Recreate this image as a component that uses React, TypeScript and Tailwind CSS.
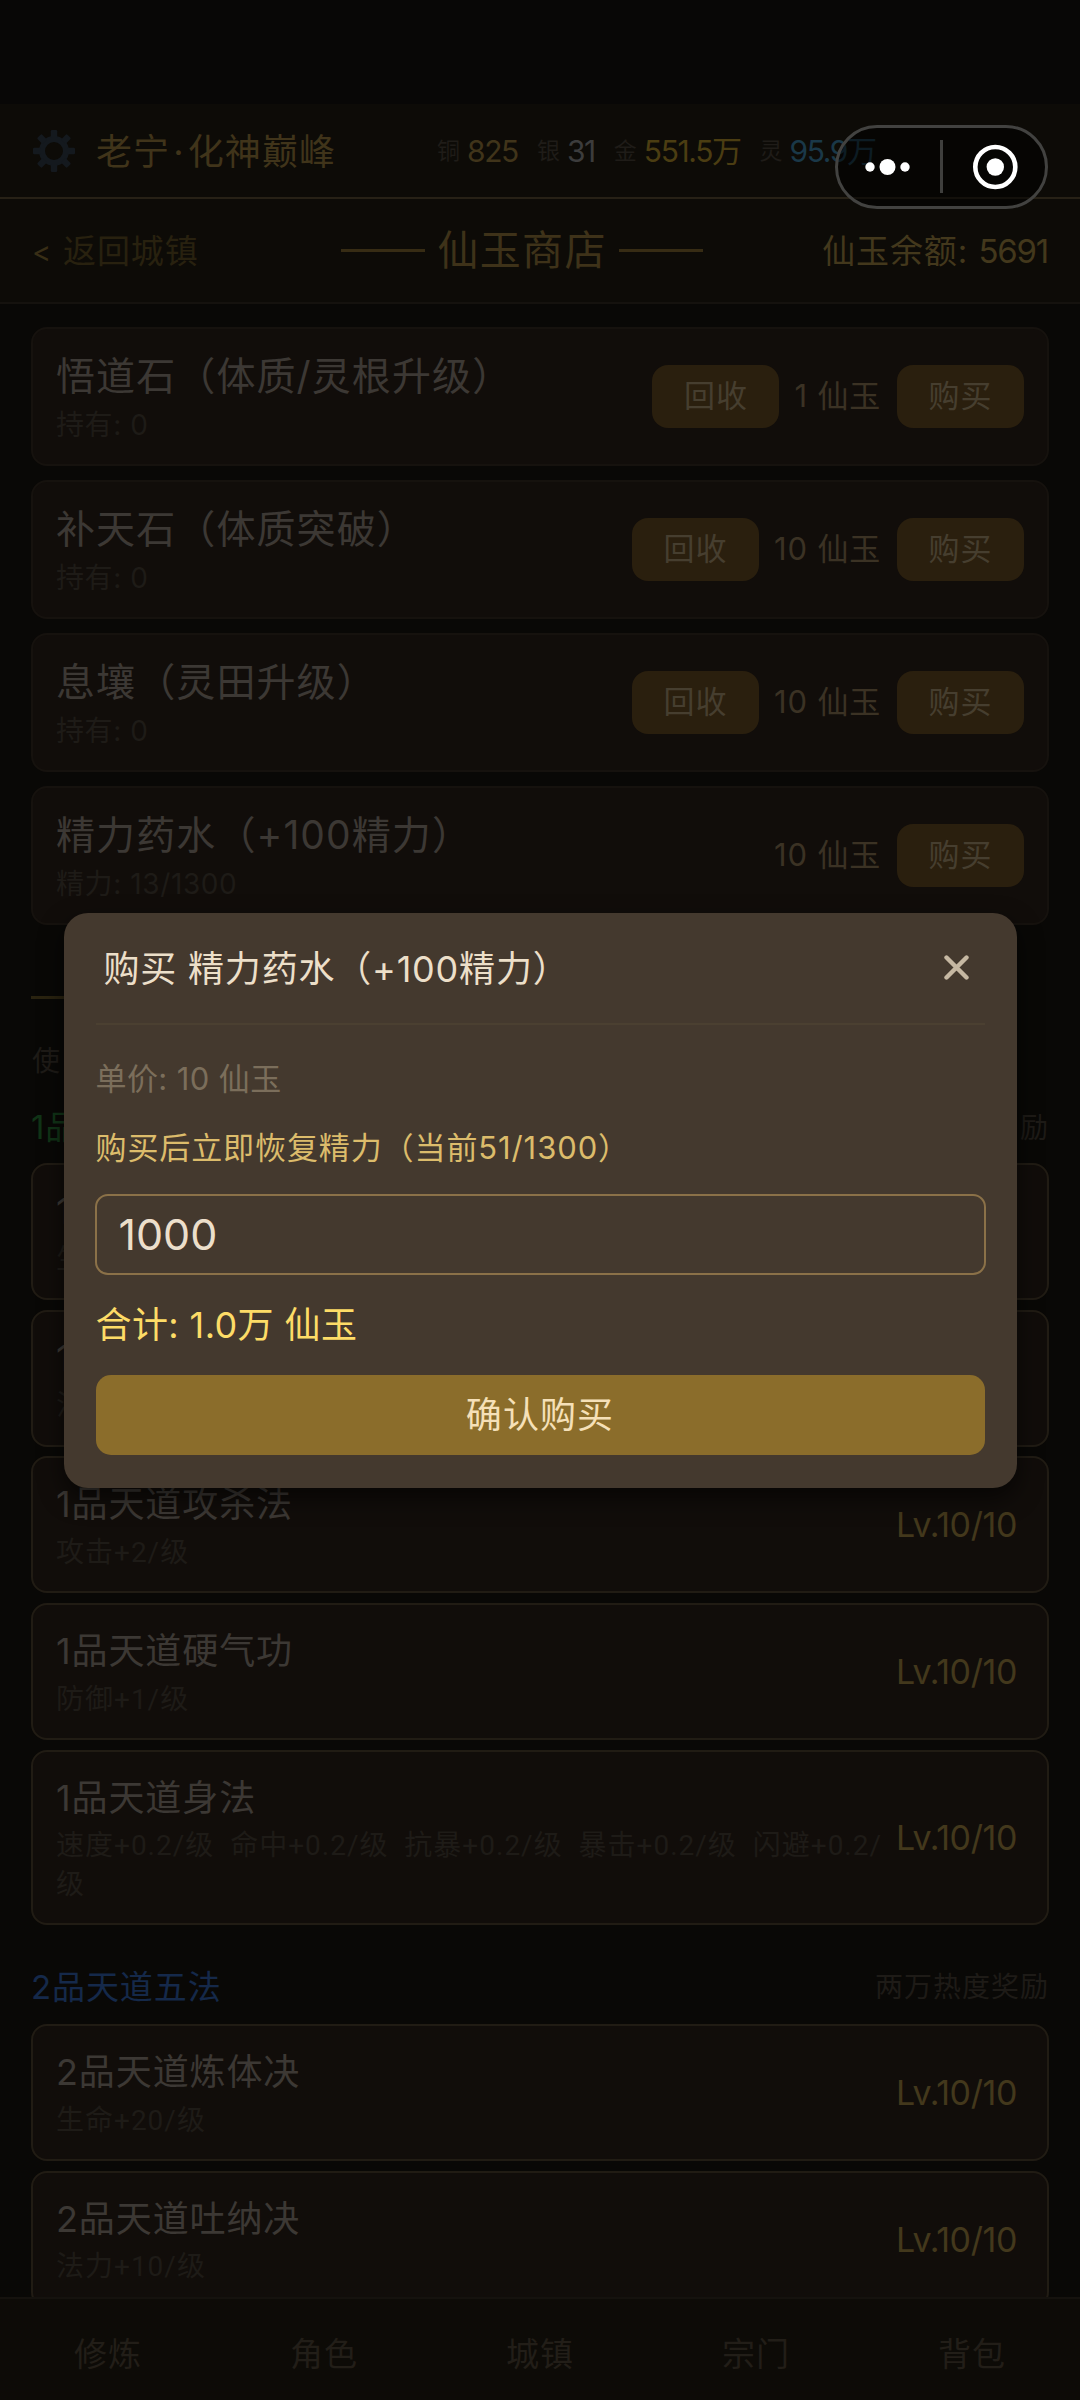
import React, { useState } from "react";

type ShopItem = {
  name: string;
  desc: string;
  price: string;
  recycle: boolean;
};

type Skill = {
  name: string;
  desc: string;
};

const shopItems: ShopItem[] = [
  { name: "悟道石（体质/灵根升级）", desc: "持有: 0", price: "1 仙玉", recycle: true },
  { name: "补天石（体质突破）", desc: "持有: 0", price: "10 仙玉", recycle: true },
  { name: "息壤（灵田升级）", desc: "持有: 0", price: "10 仙玉", recycle: true },
  { name: "精力药水（+100精力）", desc: "精力: 13/1300", price: "10 仙玉", recycle: false },
];

const skillsOne: Skill[] = [
  { name: "1", desc: "生" },
  { name: "1", desc: "法" },
  { name: "1品天道攻杀法", desc: "攻击+2/级" },
  { name: "1品天道硬气功", desc: "防御+1/级" },
  {
    name: "1品天道身法",
    desc: "速度+0.2/级  命中+0.2/级  抗暴+0.2/级  暴击+0.2/级  闪避+0.2/级",
  },
];

const skillsTwo: Skill[] = [
  { name: "2品天道炼体决", desc: "生命+20/级" },
  { name: "2品天道吐纳决", desc: "法力+10/级" },
];

const tabs = ["修炼", "角色", "城镇", "宗门", "背包"];

const GearIcon = () => (
  <svg width="44" height="44" viewBox="-22 -22 44 44" className="shrink-0">
    <circle r="12" fill="none" stroke="#14191e" strokeWidth="6" />
    {[0, 45, 90, 135, 180, 225, 270, 315].map((a) => (
      <rect key={a} x="-3.2" y="-21" width="6.4" height="8" rx="1.2" fill="#14191e" transform={`rotate(${a})`} />
    ))}
  </svg>
);

const ShopCard = ({ item }: { item: ShopItem }) => (
  <div className="flex h-[139px] shrink-0 items-center justify-between rounded-[16px] border-2 border-[#16120e] bg-[#110d0a] px-[23px]">
    <div className="flex flex-col gap-[4px]">
      <p className="text-[39px] leading-[53px] tracking-[1.1px] text-[#3c3834]">{item.name}</p>
      <p className="text-[28px] leading-[39px] tracking-[0.6px] text-[#1e1b17]">{item.desc}</p>
    </div>
    <div className="flex items-center">
      {item.recycle && (
        <button className="h-[63px] w-[127px] rounded-[16px] bg-[#2a1f0e] text-[31px] tracking-[1px] text-[#463e2f]">回收</button>
      )}
      <span className="mr-[16px] ml-[15px] text-[31px] tracking-[0.8px] text-[#3b3224]">{item.price}</span>
      <button className="h-[63px] w-[127px] rounded-[16px] bg-[#2a1f0e] text-[31px] tracking-[1px] text-[#463e2f]">购买</button>
    </div>
  </div>
);

const SkillCard = ({ skill }: { skill: Skill }) => (
  <div className="flex shrink-0 items-center justify-between rounded-[16px] border-2 border-[#211c14] bg-[#110d0a] pt-[20px] pr-[23px] pb-[19px] pl-[23px]">
    <div className="flex flex-1 flex-col gap-[3.5px]">
      <p className="text-[36px] leading-[52px] tracking-[0.9px] text-[#3c3834]">{skill.name}</p>
      <p className="font-['Roboto','Noto_Sans_CJK_SC',sans-serif] text-[28px] leading-[38.5px] tracking-[1px] break-all whitespace-pre-wrap text-[#1e1b17]">
        {skill.desc}
      </p>
    </div>
    <span className="ml-[12px] w-[128px] shrink-0 text-[34px] leading-[44px] tracking-[-0.4px] whitespace-nowrap text-[#43381c]">Lv.10/10</span>
  </div>
);

const Page: React.FC = () => {
  const [count, setCount] = useState("1000");

  return (
    <div className="relative flex h-[2400px] w-[1080px] flex-col overflow-hidden bg-[#090806] font-['Inter','Noto_Sans_CJK_SC',sans-serif]">
      {/* status bar */}
      <div className="h-[104px] shrink-0 bg-[#080706]" />

      {/* header */}
      <header className="flex h-[95px] shrink-0 items-center border-b-2 border-[#272116] bg-[#0d0b07] pl-[32px]">
        <GearIcon />
        <span className="ml-[20px] w-[341px] pt-[2px] text-[36px] tracking-[1.1px] text-[#40341a]">
          老宁<span className="mx-[3px]">·</span>化神巅峰
        </span>
        <div className="flex items-center gap-[19px] pt-[2px] text-[30px] tracking-[-1.4px] whitespace-nowrap">
          <div className="flex items-center gap-[7px]">
            <span className="text-[23px] tracking-normal text-[#1f1c18]">铜</span>
            <span className="text-[#40341a]">825</span>
          </div>
          <div className="flex items-center gap-[7px]">
            <span className="text-[23px] tracking-normal text-[#1f1c18]">银</span>
            <span className="text-[#3c3c3c]">31</span>
          </div>
          <div className="flex items-center gap-[7px]">
            <span className="text-[23px] tracking-normal text-[#1f1c18]">金</span>
            <span className="text-[#4b3d12]">551.5万</span>
          </div>
          <div className="flex items-center gap-[7px]">
            <span className="text-[23px] tracking-normal text-[#1f1c18]">灵</span>
            <span className="text-[#1a3848]">95.9万</span>
          </div>
        </div>
      </header>

      {/* sub header */}
      <div className="flex h-[105px] shrink-0 items-center justify-between border-b-2 border-[#15120e] bg-[#0d0b07] px-[32px] text-[33px]">
        <div className="flex w-[190px] items-center pt-[3px] tracking-[0.9px] whitespace-nowrap text-[#28210f]">
          <span className="w-[31px] text-[29px] text-[#382e16]">&lt;</span>返回城镇
        </div>
        <div className="flex items-center gap-[12px]">
          <div className="h-[3px] w-[84px] bg-[#372c14]" />
          <span className="pt-[1px] text-[41px] tracking-[1.3px] text-[#3e3219]">仙玉商店</span>
          <div className="h-[3px] w-[84px] bg-[#372c14]" />
        </div>
        <span className="pt-[3px] tracking-[0.9px] text-[#43381c]">
          仙玉余额: <span className="tracking-[-1.2px]">5691</span>
        </span>
      </div>

      {/* list */}
      <main className="flex min-h-0 flex-1 flex-col overflow-hidden px-[31px] pt-[23px]">
        <div className="flex shrink-0 flex-col gap-[14px]">
          {shopItems.map((item) => (
            <ShopCard key={item.name} item={item} />
          ))}
        </div>

        <div className="mt-[71px] h-[3px] w-[84px] shrink-0 bg-[#2a2310]" />
        <p className="mt-[41px] shrink-0 pl-[1px] text-[28px] leading-[42px] text-[#1e1b17]">使</p>

        <div className="mt-[21px] flex h-[48px] shrink-0 items-center justify-between">
          <span className="pt-[1px] text-[33px] tracking-[0.9px] text-[#113417]">1品</span>
          <span className="pt-[1px] text-[28px] tracking-[1.1px] text-[#1e1b17]">励</span>
        </div>
        <div className="mt-[12px] flex shrink-0 flex-col gap-[9.7px]">
          {skillsOne.map((s, i) => (
            <SkillCard key={i} skill={s} />
          ))}
        </div>

        <div className="mt-[38px] flex h-[48px] shrink-0 items-center justify-between">
          <span className="pt-[1px] text-[33px] tracking-[0.9px] text-[#15294a]">2品天道五法</span>
          <span className="text-[28px] tracking-[1px] text-[#1e1b17]">两万热度奖励</span>
        </div>
        <div className="mt-[13px] flex shrink-0 flex-col gap-[9.7px]">
          {skillsTwo.map((s, i) => (
            <SkillCard key={i} skill={s} />
          ))}
        </div>
      </main>

      {/* bottom tabs */}
      <nav className="grid h-[103px] shrink-0 grid-cols-5 items-center border-t-2 border-[#15120e] bg-[#0d0b07] pt-[10px] text-center text-[33px] tracking-[1.1px] text-[#221e18]">
        {tabs.map((t) => (
          <span key={t}>{t}</span>
        ))}
      </nav>

      {/* purchase modal */}
      <div className="absolute inset-0 flex items-center justify-center">
        <div className="flex h-[575px] w-[953px] flex-col rounded-[24px] bg-[#44392e] px-[32px] shadow-[0_10px_24px_rgba(0,0,0,0.6)]">
          <div className="flex h-[112px] shrink-0 items-center justify-between border-b-2 border-[#4b4031] pr-[16px] pl-[8px]">
            <span className="pt-[2px] text-[36px] tracking-[0.8px] text-[#ecdfc9]">购买 精力药水（+100精力）</span>
            <svg width="25" height="25" viewBox="0 0 25 25" fill="none" stroke="#c6b8a2" strokeWidth="4.4" strokeLinecap="round">
              <path d="M2.5 2.5 22.5 22.5M22.5 2.5 2.5 22.5" />
            </svg>
          </div>
          <p className="mt-[30px] text-[31px] leading-[48px] tracking-[0.4px] text-[#7b6e5b]">单价: 10 仙玉</p>
          <p className="mt-[21px] text-[31px] leading-[48px] tracking-[0.9px] text-[#dcbc6b]">购买后立即恢复精力（当前51/1300）</p>
          <input
            value={count}
            onChange={(e) => setCount(e.target.value)}
            className="-mx-[1px] mt-[22px] h-[81px] shrink-0 rounded-[13px] border-2 border-[#8b7148] bg-transparent px-[22px] text-[43px] text-[#ecdfcb] outline-none"
          />
          <p className="mt-[24px] text-[36px] leading-[52px] tracking-[0.4px] text-[#fddc67]">合计: 1.0万 仙玉</p>
          <button className="mt-[24px] h-[80px] shrink-0 rounded-[15px] bg-[#8b6d2b] text-[36px] tracking-[1.1px] text-[#f5e0b8]">
            确认购买
          </button>
        </div>
      </div>

      {/* mini program capsule */}
      <div className="absolute top-[125px] right-[32px] flex h-[84px] w-[213px] items-center rounded-full border-[3px] border-[#424240] bg-black/50">
        <svg width="207" height="78" viewBox="0 0 207 78" className="shrink-0">
          <circle cx="32" cy="39" r="4.7" fill="#fff" />
          <circle cx="49.5" cy="39" r="8" fill="#fff" />
          <circle cx="67" cy="39" r="4.7" fill="#fff" />
          <rect x="102" y="12" width="3" height="53" fill="#3f3f3d" />
          <circle cx="157.3" cy="39" r="20" fill="none" stroke="#fff" strokeWidth="4.6" />
          <circle cx="157.3" cy="39" r="8.7" fill="#fff" />
        </svg>
      </div>
    </div>
  );
};

export default Page;
